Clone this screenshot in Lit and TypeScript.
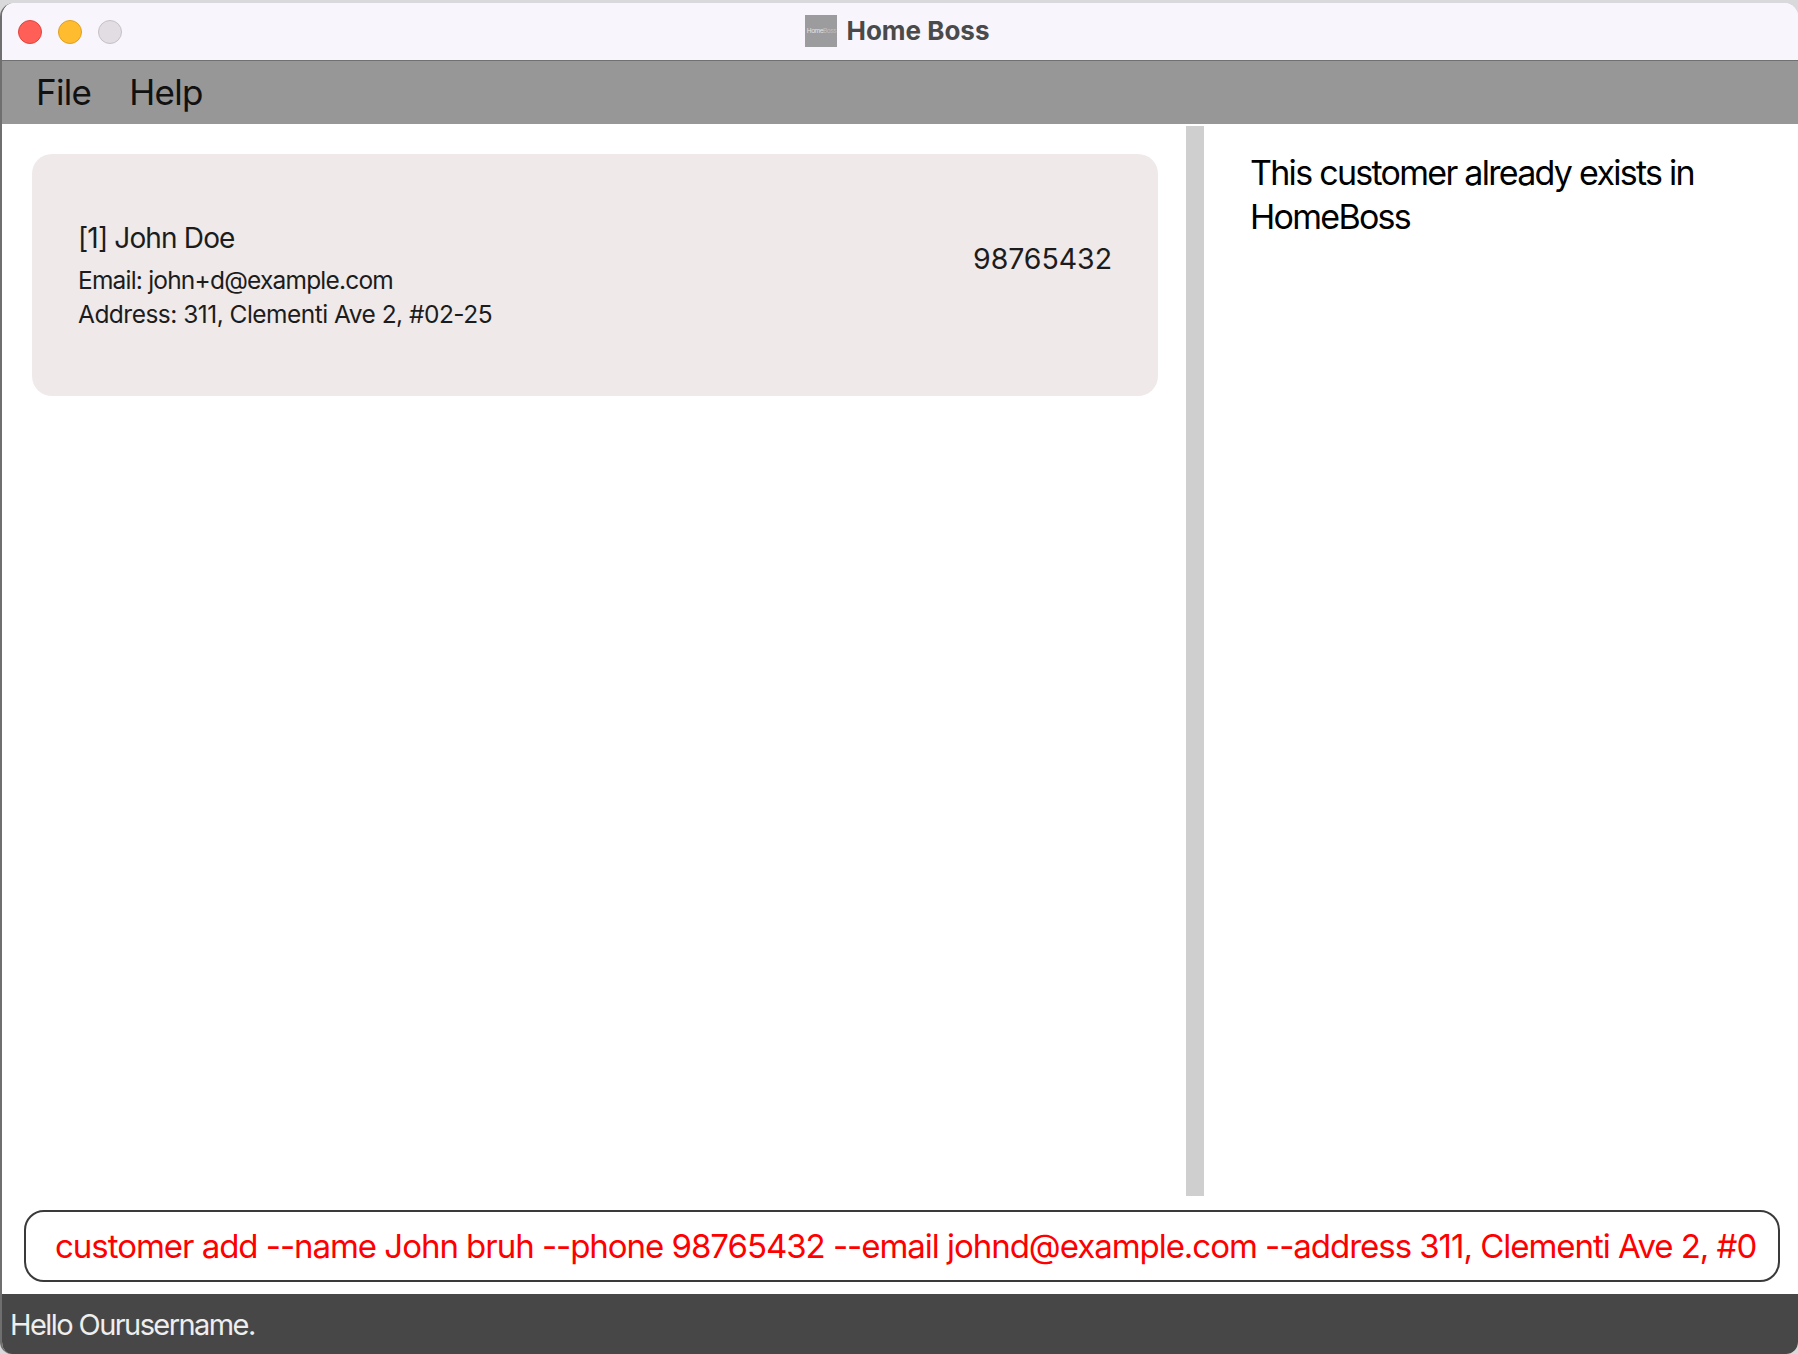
import { LitElement, html, css } from "lit";
import { customElement } from "lit/decorators.js";

@customElement("app-root")
export class AppRoot extends LitElement {
  static styles = css`
    :host { display: block; width: 1798px; height: 1354px; background: #d9d8da; overflow: hidden; font-family: Inter, "Liberation Sans", sans-serif; }
    .window { box-sizing: border-box; height: 1354px; padding-top: 3px; display: flex; flex-direction: column; }
    .frame { flex: 1; min-height: 0; display: flex; flex-direction: column; border-radius: 14px 14px 12px 12px; overflow: hidden; background: #fff; border-left: 2px solid #6f6f6f; }
    .titlebar { height: 58px; flex: none; box-sizing: border-box; background: #f9f5fc; border-bottom: 1px solid #707070; display: grid; grid-template-columns: 1fr auto 1fr; align-items: center; }
    .lights { display: flex; gap: 16px; padding-left: 16px; }
    .light { width: 24px; height: 24px; box-sizing: border-box; border-radius: 50%; border: 1px solid; }
    .red { background: #ff5f57; border-color: #e0443e; }
    .yellow { background: #febc2e; border-color: #dfa023; }
    .grey { background: #e1dde2; border-color: #c5c1c6; }
    .title { display: flex; align-items: center; gap: 9px; margin: 0 5px 2px 0; font-size: 26px; font-weight: 700; color: #4a4a4a; letter-spacing: 0; }
    .logo { width: 32px; height: 32px; background: #9c9b9d; display: flex; align-items: center; justify-content: center; font-size: 6.5px; font-weight: 400; color: #e4e4e4; letter-spacing: -0.5px; white-space: nowrap; }
    .logo span { opacity: .5; }
    .menu { height: 63px; flex: none; box-sizing: border-box; padding: 0 0 2px 34px; background: #979797; display: flex; align-items: center; gap: 38px; font-size: 35px; color: #111; letter-spacing: -0.7px; }
    .main { flex: 1; min-height: 0; display: flex; background: #fff; }
    .left { width: 1184px; flex: none; box-sizing: border-box; padding: 30px 0 0 30px; }
    .card { box-sizing: border-box; width: 1126px; height: 242px; background: #efe9ea; border-radius: 20px; padding: 0 46px 0 46px; display: flex; align-items: center; justify-content: space-between; color: #1c1c1c; }
    .info { display: flex; flex-direction: column; padding-top: 2px; }
    .name { font-size: 28px; line-height: 34px; letter-spacing: -0.85px; margin-bottom: 8px; }
    .line { font-size: 24.5px; line-height: 34px; letter-spacing: -0.8px; }
    .address { letter-spacing: -0.52px; }
    .phone { font-size: 28.5px; letter-spacing: -0.05px; margin-bottom: 34px; }
    .divider { width: 18px; flex: none; background: #cfcfcf; margin: 2px 0 0; height: 1070px; }
    .result { flex: 1; box-sizing: border-box; padding: 27px 40px 0 46px; font-size: 34px; line-height: 44px; color: #000; letter-spacing: -1.72px; }
    .command { flex: none; height: 109px; box-sizing: border-box; padding: 0 18px 12px 22px; display: flex; align-items: flex-end; }
    .box { flex: 1; box-sizing: border-box; height: 72px; border: 2px solid #3a3a3a; border-radius: 20px; display: flex; align-items: center; padding: 0 20px 0 29px; font-size: 33px; color: #fe0000; letter-spacing: -1.03px; white-space: nowrap; overflow: hidden; }
    .status { height: 60px; flex: none; background: #474747; color: #eee; font-size: 29px; letter-spacing: -1.58px; display: flex; align-items: center; padding-left: 8px; }
  `;
  render() {
    return html`<div class="window"><div class="frame">
      <div class="titlebar">
        <div class="lights"><div class="light red"></div><div class="light yellow"></div><div class="light grey"></div></div>
        <div class="title"><div class="logo">Home<span>Boss</span></div>Home Boss</div>
        <div></div>
      </div>
      <div class="menu"><span>File</span><span>Help</span></div>
      <div class="main">
        <div class="left">
          <div class="card">
            <div class="info">
              <div class="name">[1] John Doe</div>
              <div class="line">Email: john+d@example.com</div>
              <div class="line address">Address: 311, Clementi Ave 2, #02-25</div>
            </div>
            <div class="phone">98765432</div>
          </div>
        </div>
        <div class="divider"></div>
        <div class="result">This customer already exists in HomeBoss</div>
      </div>
      <div class="command"><div class="box">customer add --name John bruh --phone 98765432 --email johnd@example.com --address 311, Clementi Ave 2, #0</div></div>
      <div class="status">Hello Ourusername.</div>
    </div></div>`;
  }
}
